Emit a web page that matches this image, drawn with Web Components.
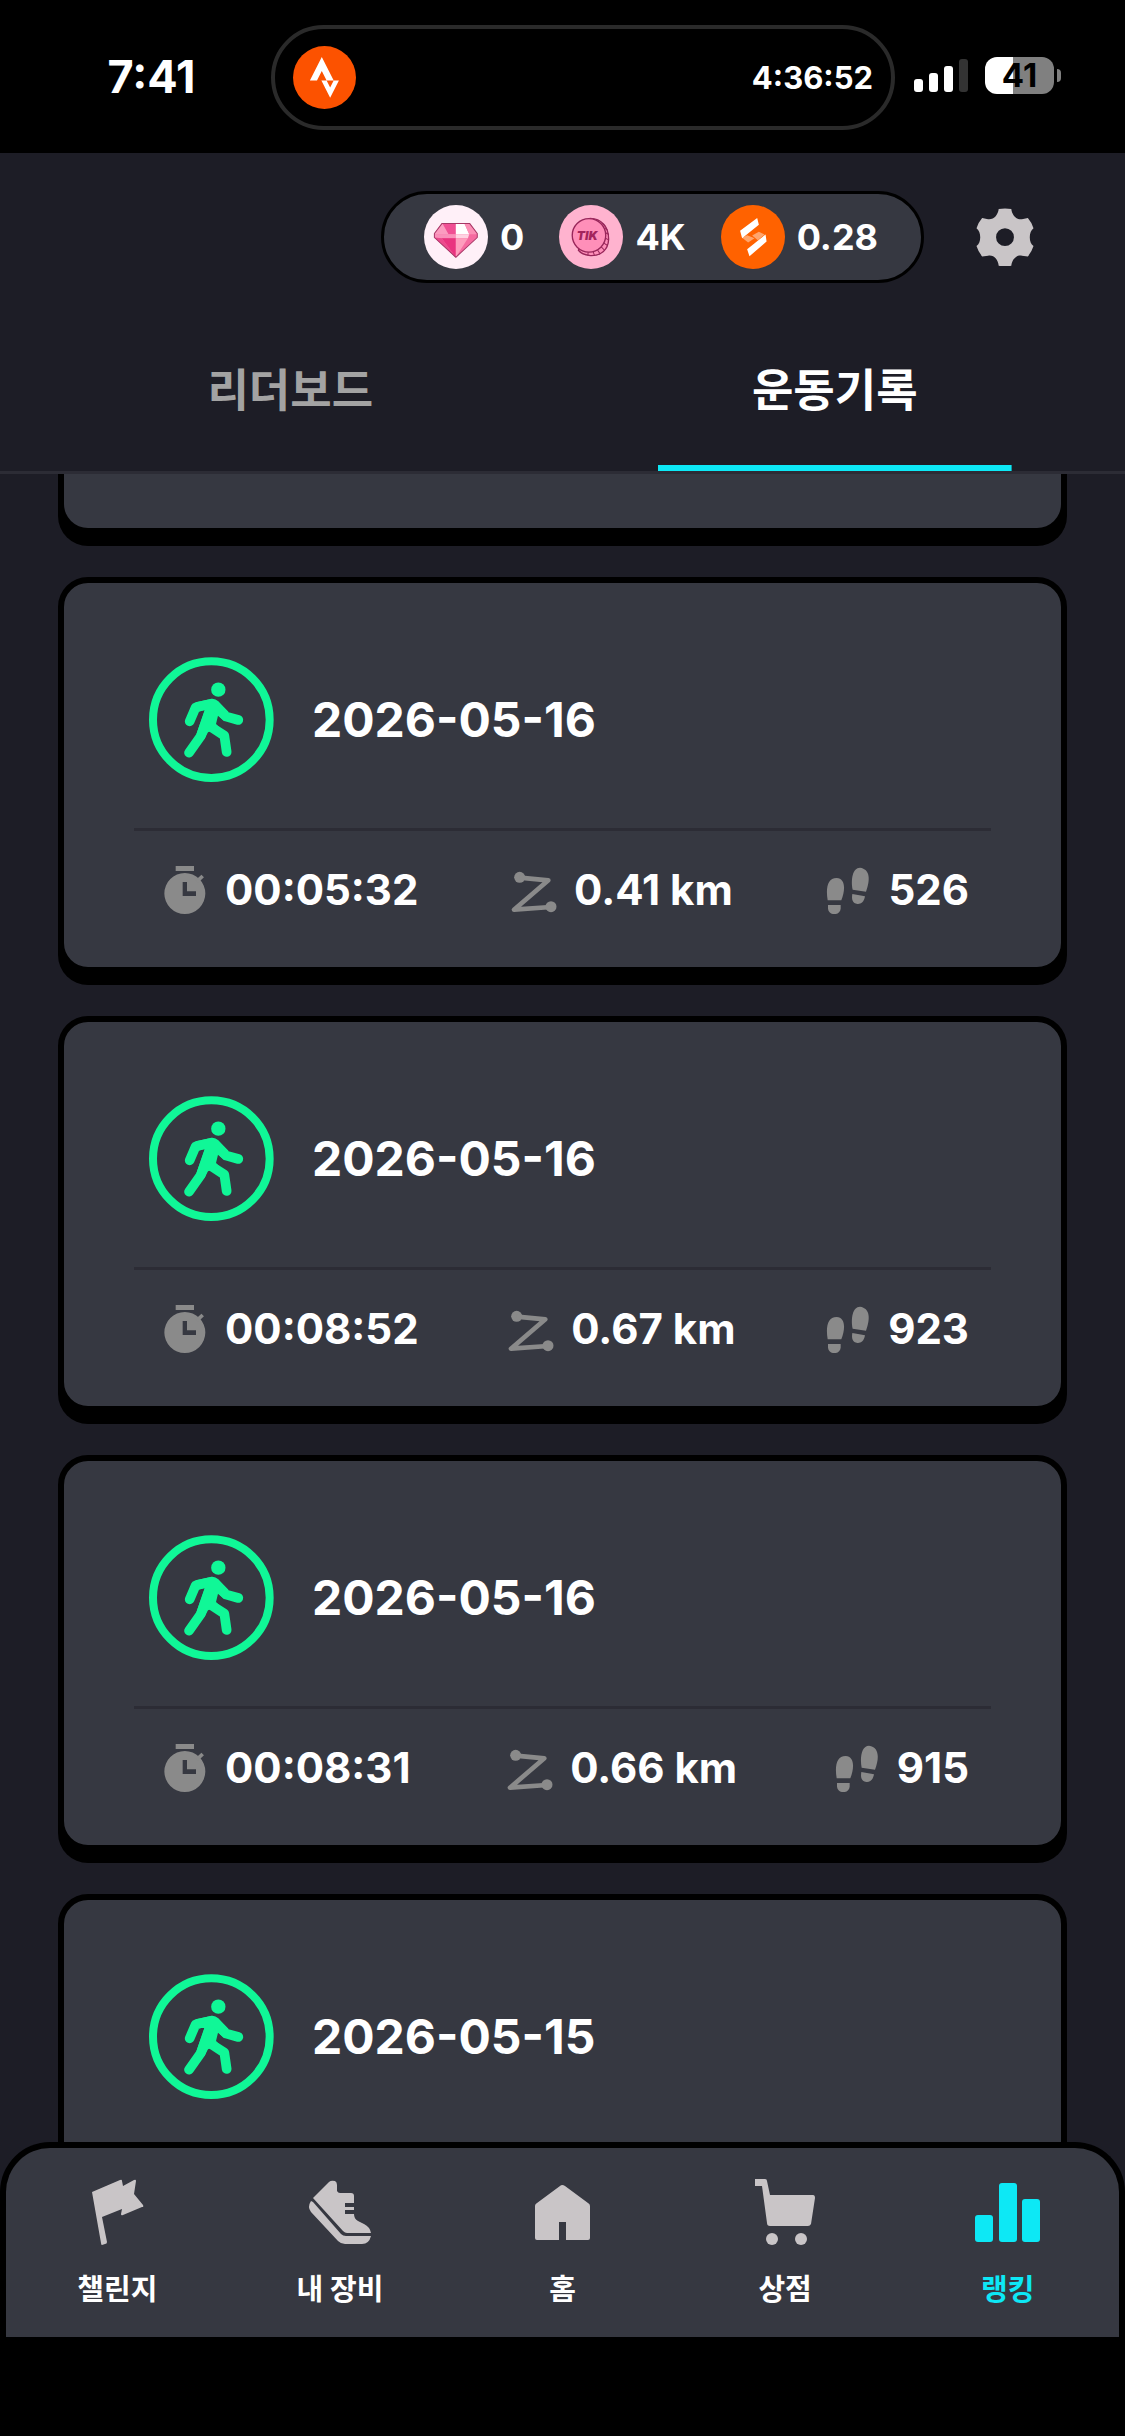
<!DOCTYPE html>
<html lang="ko">
<head>
  <meta charset="UTF-8">
  <meta name="viewport" content="width=device-width, initial-scale=1">
  <title>운동기록</title>
  <style>
    :root {
      --bg: #1d1d26;
      --panel: #363841;
      --line: #2c2c35;
      --cyan: #0de8f5;
      --green: #10f797;
      --icon: #c9c5c7;
      --muted: #8a8a8a;
    }

    body {
      margin: 0;
      background: #000;
      color: #fff;
      font-family: Inter, "Noto Sans CJK KR", sans-serif;
      font-weight: 700;
    }
  </style>
</head>
<body>
<template id="app-template">
  <style>
    :host { display: flex; flex-direction: column; height: 100vh; background: var(--bg); }
    main { flex: 1; min-height: 0; overflow: hidden; display: flex; flex-direction: column; gap: 43px; padding: 0 58px; }
  </style>
  <slot name="top"></slot>
  <main><slot></slot></main>
  <slot name="bottom"></slot>
</template>

<template id="status-template">
  <style>
    :host { display: grid; grid-template-columns: 271fr 624fr 230fr; height: 153px; background: #000; }
    .clock { padding: 0 0 0 32px; text-align: center; font-size: 45px; line-height: 153px; }
    .island {
      display: flex; align-items: center; justify-content: space-between; box-sizing: border-box;
      height: 105px; margin-top: 25px; padding: 0 18px; border: 4px solid #2a2a2a; border-radius: 53px;
      font-size: 31px; font-weight: 700;
    }
    .right { display: flex; align-items: center; gap: 17px; height: 151px; padding-left: 19px; }
    .signal { display: flex; align-items: flex-end; gap: 6px; }
    .signal i { width: 9px; border-radius: 3px; background: #fff; }
    .signal i:nth-child(1) { height: 13px; }
    .signal i:nth-child(2) { height: 19px; }
    .signal i:nth-child(3) { height: 26px; }
    .signal i:nth-child(4) { height: 33px; background: #333; }
    .battery { display: flex; align-items: center; gap: 3px; }
    .level {
      width: 69px; height: 37px; border-radius: 12px; text-align: center; color: #000;
      font-size: 33px; line-height: 37px;
      background: linear-gradient(to right, #fff 41%, #808080 41%);
    }
    .tip { width: 4px; height: 13px; border-radius: 0 4px 4px 0; background: #808080; }
  </style>
  <div class="clock"><slot name="clock"></slot></div>
  <div class="island">
    <svg width="63" height="63" viewBox="0 0 63 63">
      <circle cx="31.5" cy="31.5" r="31.5" fill="#fc5200"/>
      <path transform="translate(11 11) scale(1.7)" fill="#fff" d="M15.387 17.944l-2.089-4.116h-3.065L15.387 24l5.15-10.172h-3.066m-7.008-5.599l2.836 5.598h4.172L10.463 0l-7 13.828h4.169"/>
    </svg>
    <slot name="timer"></slot>
  </div>
  <div class="right">
    <div class="signal"><i></i><i></i><i></i><i></i></div>
    <div class="battery"><div class="level"><slot name="battery"></slot></div><div class="tip"></div></div>
  </div>
</template>

<template id="wallet-template">
  <style>
    :host { display: flex; align-items: center; justify-content: flex-end; gap: 52px; padding: 38px 91px 26px; }
    .pill {
      display: flex; align-items: center; gap: 35px; box-sizing: border-box; height: 92px;
      padding: 0 43px 0 40px; border: 3px solid #000; border-radius: 46px; background: var(--panel);
    }
    .coin { display: flex; align-items: center; gap: 12px; font-size: 36px; }
    button { padding: 0; border: 0; background: none; }
    svg { display: block; }
  </style>
  <div class="pill">
    <div class="coin">
      <svg width="64" height="64" viewBox="159 75 191 191">
        <circle cx="254.500" cy="170.500" r="95.500" fill="#fff0f8"/>
        <path fill="#f66aa0" d="M213 129H295L318 160V172L254 231L190 172V160z"/>
        <path fill="#f04f94" d="M213 129H254V162H232z"/>
        <path fill="#fb9cc0" d="M213 129L232 162H190z"/>
        <path fill="#fff" d="M254 129H279L294 162H254z"/>
        <path fill="#fc8fb6" d="M279 129H295L318 162H294z"/>
        <path fill="#f990ba" d="M190 162H254V174H190z"/>
        <path fill="#ffd3e2" d="M254 162H294L290 174H254z"/>
        <path fill="#e9337f" d="M212 174H254V231z"/>
        <path fill="#fe9dbd" d="M254 174H290L254 231z"/>
        <path fill="#ec4a8d" d="M190 172L212 174L254 231z"/>
        <path fill="none" stroke="#a63766" stroke-width="3" stroke-linejoin="round" d="M213 130H295L318 160V172L254 231L190 172V160z"/>
      </svg>
      <slot name="gem"></slot>
    </div>
    <div class="coin">
      <svg width="64" height="64" viewBox="564 75 191 191">
        <circle cx="659.500" cy="170.500" r="95.500" fill="#ffb3cf"/>
        <path fill="#ff8fb9" stroke="#98265a" stroke-width="4" d="M657 115C690 115 713 140 712 178C711 208 690 227 658 226C642 225 630 220 622 210z"/>
        <path stroke="#98265a" stroke-width="3" d="M693 130L702 137M700 144L709 150M703 158L713 163M702 174L713 179M698 189L709 196M690 200L700 210M679 209L686 220M666 214L670 226M651 216L650 226"/>
        <circle cx="653.500" cy="165.500" r="50" fill="#ff8fb9" stroke="#98265a" stroke-width="4"/>
        <text x="648" y="178" text-anchor="middle" font-family="Inter, sans-serif" font-size="36" font-weight="900" font-style="italic" fill="#a3245c">TIK</text>
      </svg>
      <slot name="tik"></slot>
    </div>
    <div class="coin">
      <svg width="64" height="64" viewBox="57 75 191 191">
        <circle cx="152.500" cy="170.500" r="95.500" fill="#ff6200"/>
        <path fill="#ffa56c" d="M120 173L135 165L157 174L138 187zM150 166L170 155L187 163L167 180z"/>
        <path fill="#fff" d="M114 152L165 114L170 134L120 174zM135 207L190 163L193 184L142 228z"/>
      </svg>
      <slot name="token"></slot>
    </div>
  </div>
  <button type="button" aria-label="설정">
    <svg width="58" height="58" viewBox="828 84 174 175">
      <path fill="var(--icon)" fill-rule="evenodd" d="M896 87Q915 84 934 87C936 104 948 120 966 118L984 114Q996 128 1001 145C986 156 986 188 1001 199Q996 216 984 230L966 228C948 225 936 240 934 258Q915 261 896 258C894 240 882 225 864 228L846 230Q834 216 829 199C844 188 844 156 829 145Q834 128 846 114L864 118C882 120 894 104 896 87zM915 145A27 27 0 1 0 915 199A27 27 0 1 0 915 145z"/>
    </svg>
  </button>
</template>

<template id="tabs-template">
  <style>
    :host { display: flex; padding: 0 18px; border-bottom: 3px solid var(--line); }
    ::slotted(button) {
      flex: 1; height: 162px; padding: 0 0 6px; border: 0; color: #a3a3a3;
      font: inherit; font-size: 45px;
      background: none;
    }
    ::slotted(button[aria-selected="true"]) {
      color: #fff;
      background: linear-gradient(var(--cyan), var(--cyan)) center bottom / 65% 6px no-repeat;
    }
  </style>
  <slot></slot>
</template>

<template id="card-template">
  <style>
    :host {
      display: block; flex: none; box-sizing: border-box; padding: 74px 70px 53px;
      border: 6px solid #000; border-radius: 30px; background: var(--panel); box-shadow: 0 12px 0 #000;
    }
    /* tail of the card that is scrolled under the tabs */
    :host([tail]) { border-top: 0; border-radius: 0 0 30px 30px; padding: 54px 0 0; }
    :host([tail]) .head, :host([tail]) .stats, :host([head]) .stats { display: none; }
    .head { display: flex; align-items: center; gap: 38px; padding: 0 15px 46px; font-size: 48px; }
    .stats {
      display: flex; justify-content: space-between; padding: 35px 22px 0 27px; border-top: 3px solid var(--line);
      font-size: 42px; line-height: 48px;
    }
    .stats span { display: flex; align-items: center; gap: 16px; }
    svg { display: block; }
  </style>
  <div class="head">
    <svg width="125" height="125" viewBox="58 48 375 375">
      <circle cx="245" cy="236" r="175" fill="none" stroke="var(--green)" stroke-width="24"/>
      <circle cx="266" cy="146" r="21.500" fill="var(--green)"/>
      <path fill="var(--green)" d="M197 184L248 173Q258 173 266 181L296 212L284 240L265 224L259 249L270 260L235 274L224 294L200 280L225 207L207 212z"/>
      <path fill="none" stroke="var(--green)" stroke-width="29" stroke-linecap="round" stroke-linejoin="round" d="M245 188L198 199L180 241M256 194L290 227L326 237M240 210L214 284L178 335M244 258L284 284L291 333"/>
    </svg>
    <slot name="date"></slot>
  </div>
  <div class="stats">
    <span>
      <svg width="48" height="48" viewBox="64 75 144 144" fill="var(--muted)">
        <path d="M108 75H163V90H108z"/>
        <path fill-rule="evenodd" d="M135.500 96A61.500 61.500 0 1 0 135.500 219A61.500 61.500 0 1 0 135.500 96zM129 123H142V151H169V165H129z"/>
        <path stroke="var(--muted)" stroke-width="11" d="M172 121L189 105"/>
      </svg>
      <slot name="time"></slot>
    </span>
    <span>
      <svg width="48" height="48" viewBox="1102 75 144 144" fill="var(--muted)">
        <circle cx="1131" cy="109" r="16.500"/>
        <circle cx="1225" cy="197" r="16.500"/>
        <path fill="none" stroke="var(--muted)" stroke-width="14" stroke-linejoin="round" d="M1131 110L1217 118L1114 206L1225 198"/>
      </svg>
      <slot name="distance"></slot>
    </span>
    <span>
      <svg width="48" height="48" viewBox="612 75 144 144" fill="var(--muted)">
        <path d="M623 178C617 142 622 111 650 111C676 112 677 145 664 178zM624 192H662V203C660 225 626 225 624 203z"/>
        <path d="M698 146C692 115 698 80 720 80C750 84 752 115 738 152zM697 159L735 166C732 184 722 190 712 189C698 187 694 176 697 159z"/>
      </svg>
      <slot name="steps"></slot>
    </span>
  </div>
</template>

<template id="nav-template">
  <style>
    /* the rounded top lies over the end of the list */
    :host { display: block; position: relative; margin-top: -46px; }
    nav { display: flex; border: solid #000; border-width: 6px 6px 0; border-radius: 50px 50px 0 0; background: var(--panel); }
    .home-area { height: 99px; background: #000; }
  </style>
  <nav><slot></slot></nav>
  <div class="home-area"></div>
</template>

<template id="item-template">
  <style>
    :host { flex: 1; display: block; }
    a {
      display: flex; flex-direction: column; align-items: center; gap: 22px; padding: 28px 0 27px;
      color: #fff; text-decoration: none; font-size: 29px; line-height: 40px;
    }
    svg { display: block; fill: var(--icon); }
    :host([active]) a { color: var(--cyan); }
    :host([active]) svg { fill: var(--cyan); }
  </style>
  <a href="#"><svg width="72" height="72" viewBox="0 0 72 72"></svg><slot></slot></a>
</template>

<walk-app>
  <status-bar slot="top">
    <span slot="clock">7:41</span>
    <span slot="timer">4:36:52</span>
    <span slot="battery">41</span>
  </status-bar>
  <wallet-header slot="top">
    <span slot="gem">0</span>
    <span slot="tik">4K</span>
    <span slot="token">0.28</span>
  </wallet-header>
  <tab-bar slot="top" role="tablist">
    <button type="button" role="tab" aria-selected="false">리더보드</button>
    <button type="button" role="tab" aria-selected="true">운동기록</button>
  </tab-bar>

  <record-card tail></record-card>
  <record-card>
    <span slot="date">2026-05-16</span>
    <span slot="time">00:05:32</span>
    <span slot="distance">0.41 km</span>
    <span slot="steps">526</span>
  </record-card>
  <record-card>
    <span slot="date">2026-05-16</span>
    <span slot="time">00:08:52</span>
    <span slot="distance">0.67 km</span>
    <span slot="steps">923</span>
  </record-card>
  <record-card>
    <span slot="date">2026-05-16</span>
    <span slot="time">00:08:31</span>
    <span slot="distance">0.66 km</span>
    <span slot="steps">915</span>
  </record-card>
  <record-card head>
    <span slot="date">2026-05-15</span>
  </record-card>

  <bottom-nav slot="bottom">
    <nav-item icon="flag">챌린지</nav-item>
    <nav-item icon="shoe">내 장비</nav-item>
    <nav-item icon="home">홈</nav-item>
    <nav-item icon="cart">상점</nav-item>
    <nav-item icon="rank" active>랭킹</nav-item>
  </bottom-nav>
</walk-app>

<script>
  const icons = {
    flag: '<path d="M11 16L39 4Q41 3 41 5L42 10L53 4Q55 3 55 5L53 18L62 29Q63 31 61 31L42 39Q40 40 40 38L41 33L21 41L26 66Q26 68 24 68L21 69Q20 69 20 67z"/>',
    shoe: '<path d="M9 22L25 6Q27 4 31 5Q33 6 33 9V15Q34 17 36 17H47Q50 17 50 20V27H41V31H50V34H41V38H50Q50 43 54 45L60 48Q66 51 67 57H43Q41 57 39 55z"/>' +
          '<path d="M7 25L9 26L37 58Q39 60 42 60H67Q65 68 58 68H41Q37 68 34 65L7 36Q3 31 7 25z"/>',
    home: '<path d="M9 30Q9 28 11 27L34 10Q36 8 39 10L62 27Q64 28 64 30V62Q64 64 62 64H40V46H33V64H11Q9 64 9 62z"/>',
    cart: '<path d="M6 3H16Q18 3 18 5L21 19H64Q66 19 66 22L62 48Q61 50 59 50H21Q18 50 18 47L13 10H6z"/><circle cx="23" cy="63" r="6"/><circle cx="52" cy="63" r="6"/>',
    rank: '<rect x="3" y="39" width="18" height="27" rx="3"/><rect x="27" y="7" width="18" height="59" rx="3"/><rect x="50" y="23" width="18" height="43" rx="3"/>'
  };

  function define(name, templateId) {
    customElements.define(name, class extends HTMLElement {
      constructor() {
        super();
        const template = document.getElementById(templateId);
        this.attachShadow({mode: 'open'}).appendChild(template.content.cloneNode(true));
      }
    });
  }

  define('walk-app', 'app-template');
  define('status-bar', 'status-template');
  define('wallet-header', 'wallet-template');
  define('tab-bar', 'tabs-template');
  define('record-card', 'card-template');
  define('bottom-nav', 'nav-template');

  customElements.define('nav-item', class extends HTMLElement {
    constructor() {
      super();
      const template = document.getElementById('item-template');
      const shadowRoot = this.attachShadow({mode: 'open'});
      shadowRoot.appendChild(template.content.cloneNode(true));
      shadowRoot.querySelector('svg').innerHTML = icons[this.getAttribute('icon')];
    }
  });
</script>
</body>
</html>
